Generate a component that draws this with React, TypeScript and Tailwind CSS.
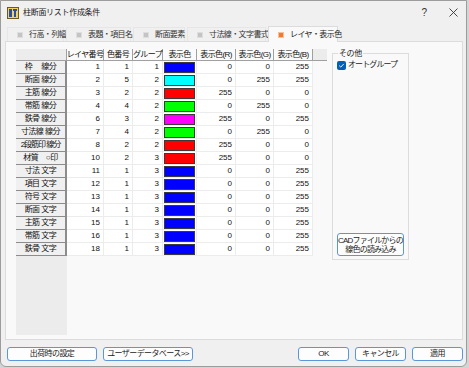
import React from 'react'

type Row = [string, number, number, number, string, number, number, number]

const rows: Row[] = [
  ['枠　 線分', 1, 1, 1, '#0000ff', 0, 0, 255],
  ['断面 線分', 2, 5, 2, '#00ffff', 0, 255, 255],
  ['主筋 線分', 3, 2, 2, '#ff0000', 255, 0, 0],
  ['帯筋 線分', 4, 4, 2, '#00ff00', 0, 255, 0],
  ['鉄骨 線分', 6, 3, 2, '#ff00ff', 255, 0, 255],
  ['寸法線 線分', 7, 4, 2, '#00ff00', 0, 255, 0],
  ['2段筋印 線分', 8, 2, 2, '#ff0000', 255, 0, 0],
  ['材質　○印', 10, 2, 3, '#ff0000', 255, 0, 0],
  ['寸法 文字', 11, 1, 3, '#0000ff', 0, 0, 255],
  ['項目 文字', 12, 1, 3, '#0000ff', 0, 0, 255],
  ['符号 文字', 13, 1, 3, '#0000ff', 0, 0, 255],
  ['断面 文字', 14, 1, 3, '#0000ff', 0, 0, 255],
  ['主筋 文字', 15, 1, 3, '#0000ff', 0, 0, 255],
  ['帯筋 文字', 16, 1, 3, '#0000ff', 0, 0, 255],
  ['鉄骨 文字', 18, 1, 3, '#0000ff', 0, 0, 255],
]

const tabs = [
  { label: '行高・列幅', w: 'w-[57px]' },
  { label: '表題・項目名', w: 'w-[65px]' },
  { label: '断面要素', w: 'w-[52px]' },
  { label: '寸法線・文字書式', w: 'w-[79px]' },
]

const heads = ['レイヤ番号', '色番号', 'グループ', '表示色', '表示色(R)', '表示色(G)', '表示色(B)']
const headW = ['w-[37px]', 'w-[29px]', 'w-[30px]', 'w-[34px]', 'w-[39px]', 'w-[38px]', 'w-[39px]']

function TitleIcon() {
  return (
    <svg width="12" height="12" viewBox="0 0 12 12">
      <rect x="0.5" y="0.5" width="11" height="11" fill="#f4d35e" stroke="#6b5a1e" />
      <rect x="2" y="2" width="3" height="8" fill="#2b4fa8" />
      <rect x="6" y="2" width="4" height="2" fill="#2b4fa8" />
      <rect x="7" y="4" width="2" height="6" fill="#2b4fa8" />
    </svg>
  )
}

function Num({ v, w }: { v: number; w: string }) {
  return (
    <div className={`${w} h-full border-r border-[#ececec] pr-[3px] flex items-center justify-end`}>{v}</div>
  )
}

function Btn({ children, w }: { children: React.ReactNode; w: string }) {
  return (
    <button className={`${w} h-[14px] rounded-[3px] border border-[#5b97d6] bg-[#fdfdfd] text-[8px] leading-none text-[#1a1a1a] whitespace-nowrap tracking-[-0.6px]`}>
      {children}
    </button>
  )
}

export default function App() {
  return (
    <div className="w-[469px] h-[368px] bg-[#d4d4d4] font-['Liberation_Sans','Noto_Sans_CJK_JP',sans-serif] text-[#111]">
      <div className="w-[467px] h-[367px] flex flex-col bg-[#f0f0f0] border border-[#9c9c9c] rounded-b-[6px] overflow-hidden">
        {/* title bar */}
        <div className="h-[23px] flex items-center pl-[6px] pr-[8px] shrink-0">
          <TitleIcon />
          <span className="ml-[4px] text-[8px] text-[#222] tracking-[-0.3px]">柱断面リスト作成条件</span>
          <span className="ml-auto text-[10px] text-[#333]">?</span>
          <svg className="ml-[22px]" width="9" height="9" viewBox="0 0 9 9">
            <path d="M0.5 0.5 L8.5 8.5 M8.5 0.5 L0.5 8.5" stroke="#333" strokeWidth="0.9" />
          </svg>
        </div>

        {/* tabs */}
        <div className="h-[17px] flex items-end gap-[2px] pl-[6px] shrink-0">
          {tabs.map((t) => (
            <div
              key={t.label}
              className={`${t.w} h-[14px] flex items-center gap-[6px] pl-[9px] bg-[#f0f0f0] border-t border-x border-[#e6e6e6] text-[8px] text-[#333]`}
            >
              <span className="w-[4px] h-[4px] bg-[#c4c4c4] border border-[#dedede] box-content shrink-0" />
              <span className="whitespace-nowrap tracking-[-0.6px]">{t.label}</span>
            </div>
          ))}
          <div className="w-[70px] h-[16px] flex items-center gap-[6px] pl-[9px] bg-[#f9f9f9] border-t border-x border-[#dcdcdc] -mb-px relative text-[8px] text-[#222]">
            <span className="w-[4px] h-[4px] bg-[#f07a30] border border-[#f6c09a] box-content shrink-0" />
            <span className="whitespace-nowrap tracking-[-0.6px]">レイヤ・表示色</span>
          </div>
        </div>

        {/* panel */}
        <div className="mx-[4px] w-[458px] h-[299px] bg-[#f9f9f9] border border-[#dcdcdc] flex pl-[10px] pt-[7px] pb-[4px] shrink-0">
          {/* grid */}
          <div className="w-[311px] h-full bg-[#f9f9f9] flex flex-col text-[8px]">
            <div className="h-[12px] flex shrink-0 bg-[#ececec] border-b border-[#a0a0a0]">
              <div className="w-[51px] h-full bg-[#ececec] border-r border-[#a0a0a0]" />
              {heads.map((h, i) => (
                <div
                  key={h}
                  className={`${headW[i]} h-full bg-[#fafafa] border-r border-[#a0a0a0] flex items-center justify-center whitespace-nowrap tracking-[-0.6px]`}
                >
                  {h}
                </div>
              ))}
            </div>
            {rows.map((r) => (
              <div key={r[0]} className="h-[13px] flex shrink-0">
                <div
                  className={`w-[51px] h-full bg-[#f0f0f0] border-r-[2px] border-b border-[#8c8c8c] flex items-center justify-center whitespace-pre overflow-hidden ${r[0].length > 6 ? 'tracking-[-1px]' : 'tracking-[-0.5px]'}`}
                >
                  {r[0]}
                </div>
                <div className="flex h-full bg-white border-b border-[#ececec]">
                  <Num v={r[1]} w="w-[37px]" />
                  <Num v={r[2]} w="w-[29px]" />
                  <Num v={r[3]} w="w-[30px]" />
                  <div className="w-[34px] h-full flex items-center pl-[1px] border-r border-[#ececec]">
                    <div className="w-[31px] h-[11px] border border-[#3a3a3a]" style={{ backgroundColor: r[4] }} />
                  </div>
                  <Num v={r[5]} w="w-[39px]" />
                  <Num v={r[6]} w="w-[38px]" />
                  <Num v={r[7]} w="w-[39px]" />
                </div>
              </div>
            ))}
            <div className="flex-1 flex">
              <div className="w-[51px] bg-[#ececec]" />
            </div>
          </div>

          {/* その他 */}
          <fieldset className="ml-[5px] w-[75px] h-[211px] border border-[#dcdcdc] px-[4px] pb-[3px] flex flex-col">
            <legend className="ml-[1px] px-[1px] text-[8px] leading-[9px] text-[#222] tracking-[-0.4px]">その他</legend>
            <label className="flex items-center gap-[2px] mt-[1px] text-[8px] text-[#222]">
              <span className="w-[9px] h-[9px] rounded-[2px] bg-[#005fb8] flex items-center justify-center shrink-0">
                <svg width="7" height="7" viewBox="0 0 7 7">
                  <path d="M1.2 3.6 L2.8 5.1 L5.8 1.9" stroke="#fff" strokeWidth="0.9" fill="none" />
                </svg>
              </span>
              <span className="whitespace-nowrap tracking-[-0.9px]">オートグループ</span>
            </label>
            <button className="mt-auto w-[67px] h-[23px] rounded-[3px] border border-[#5b97d6] bg-[#fdfdfd] text-[8px] leading-[9px] text-[#1a1a1a] whitespace-nowrap tracking-[-0.8px]">
              CADファイルからの
              <br />
              線色の読み込み
            </button>
          </fieldset>
        </div>

        {/* bottom buttons */}
        <div className="flex items-center mt-[7px] pl-[6px]">
          <Btn w="w-[90px]">出荷時の設定</Btn>
          <Btn w="w-[90px] ml-[6px]">ユーザーデータベース&gt;&gt;</Btn>
          <Btn w="w-[51px] ml-[105px]">OK</Btn>
          <Btn w="w-[51px] ml-[6px]">キャンセル</Btn>
          <Btn w="w-[51px] ml-[6px]">適用</Btn>
        </div>
      </div>
    </div>
  )
}
